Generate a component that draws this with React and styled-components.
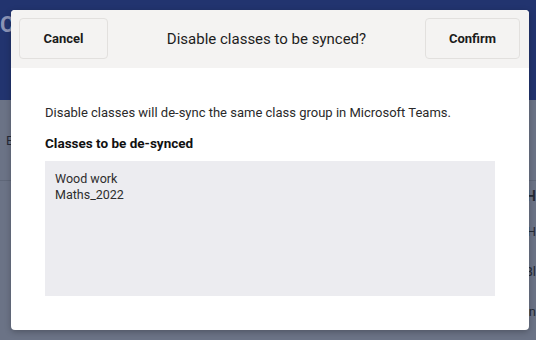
import React from 'react';
import styled, { createGlobalStyle } from 'styled-components';

const GlobalStyle = createGlobalStyle`
  html, body {
    margin: 0;
    padding: 0;
    width: 536px;
    height: 340px;
    overflow: hidden;
    font-family: Roboto, 'Noto Sans', sans-serif;
  }
`;

const Page = styled.div`
  position: relative;
  width: 536px;
  height: 340px;
  background: #6b7386;
  display: flex;
  flex-direction: column;
`;

const TopBar = styled.div`
  height: 88px;
  background: #22346f;
  display: flex;
  align-items: flex-start;
  padding: 12px 0 0 0;
  color: #8b93b5;
  font-size: 22px;
  font-weight: 700;
`;

const BackRow = styled.div`
  height: ${(p) => p.h}px;
  display: flex;
  justify-content: space-between;
  align-items: center;
  padding: 0 0 0 6px;
  font-size: ${(p) => p.size || 13}px;
  font-weight: ${(p) => (p.bold ? 700 : 400)};
  color: #252a35;
  border-bottom: ${(p) => (p.line ? '1px solid #5f6779' : 'none')};
`;

const Overlay = styled.div`
  position: absolute;
  inset: 0;
  display: flex;
  align-items: flex-start;
  padding: 10px 0 0 11px;
`;

const Dialog = styled.div`
  width: 518px;
  height: 320px;
  background: #fff;
  border-radius: 4px;
  overflow: hidden;
  box-shadow: 0 2px 6px rgba(0, 0, 0, 0.25);
  display: flex;
  flex-direction: column;
`;

const Header = styled.div`
  height: 58px;
  box-sizing: border-box;
  padding: 8px 9px 9px 8px;
  background: #f4f3f2;
  display: flex;
  align-items: stretch;
  justify-content: space-between;
`;

const HeaderButton = styled.button`
  width: ${(p) => p.w}px;
  background: #f4f3f2;
  border: 1px solid #e2e0de;
  border-radius: 4px;
  font-family: Roboto, sans-serif;
  font-size: 13px;
  font-weight: 700;
  color: #1b1b1b;
  cursor: pointer;
`;

const Title = styled.h2`
  margin: 0;
  align-self: center;
  font-size: 15px;
  font-weight: 400;
  color: #1d1d1d;
`;

const Body = styled.div`
  padding: 36px 34px 0 34px;
  display: flex;
  flex-direction: column;
`;

const Message = styled.p`
  margin: 0;
  font-size: 13px;
  line-height: 18px;
  color: #2a2a2a;
`;

const Label = styled.h3`
  margin: 12px 0 0 0;
  font-size: 13.5px;
  line-height: 18px;
  font-weight: 700;
  color: #111;
`;

const ClassBox = styled.div`
  margin-top: 9px;
  height: 135px;
  box-sizing: border-box;
  padding: 10px 10px;
  background: #ececf0;
  display: flex;
  flex-direction: column;
`;

const ClassItem = styled.div`
  font-size: 12.5px;
  line-height: 16px;
  color: #2e2e2e;
`;

export default function App() {
  return (
    <>
      <GlobalStyle />
      <Page>
        <TopBar>C</TopBar>
        <BackRow h={80} line>E</BackRow>
        <BackRow h={30} bold size={14}><span /> <span>H</span></BackRow>
        <BackRow h={40}><span /> <span>H</span></BackRow>
        <BackRow h={40}><span /> <span>Bl</span></BackRow>
        <BackRow h={40}><span /> <span>n</span></BackRow>
        <Overlay>
          <Dialog>
            <Header>
              <HeaderButton w={89}>Cancel</HeaderButton>
              <Title>Disable classes to be synced?</Title>
              <HeaderButton w={95}>Confirm</HeaderButton>
            </Header>
            <Body>
              <Message>Disable classes will de-sync the same class group in Microsoft Teams.</Message>
              <Label>Classes to be de-synced</Label>
              <ClassBox>
                <ClassItem>Wood work</ClassItem>
                <ClassItem>Maths_2022</ClassItem>
              </ClassBox>
            </Body>
          </Dialog>
        </Overlay>
      </Page>
    </>
  );
}
